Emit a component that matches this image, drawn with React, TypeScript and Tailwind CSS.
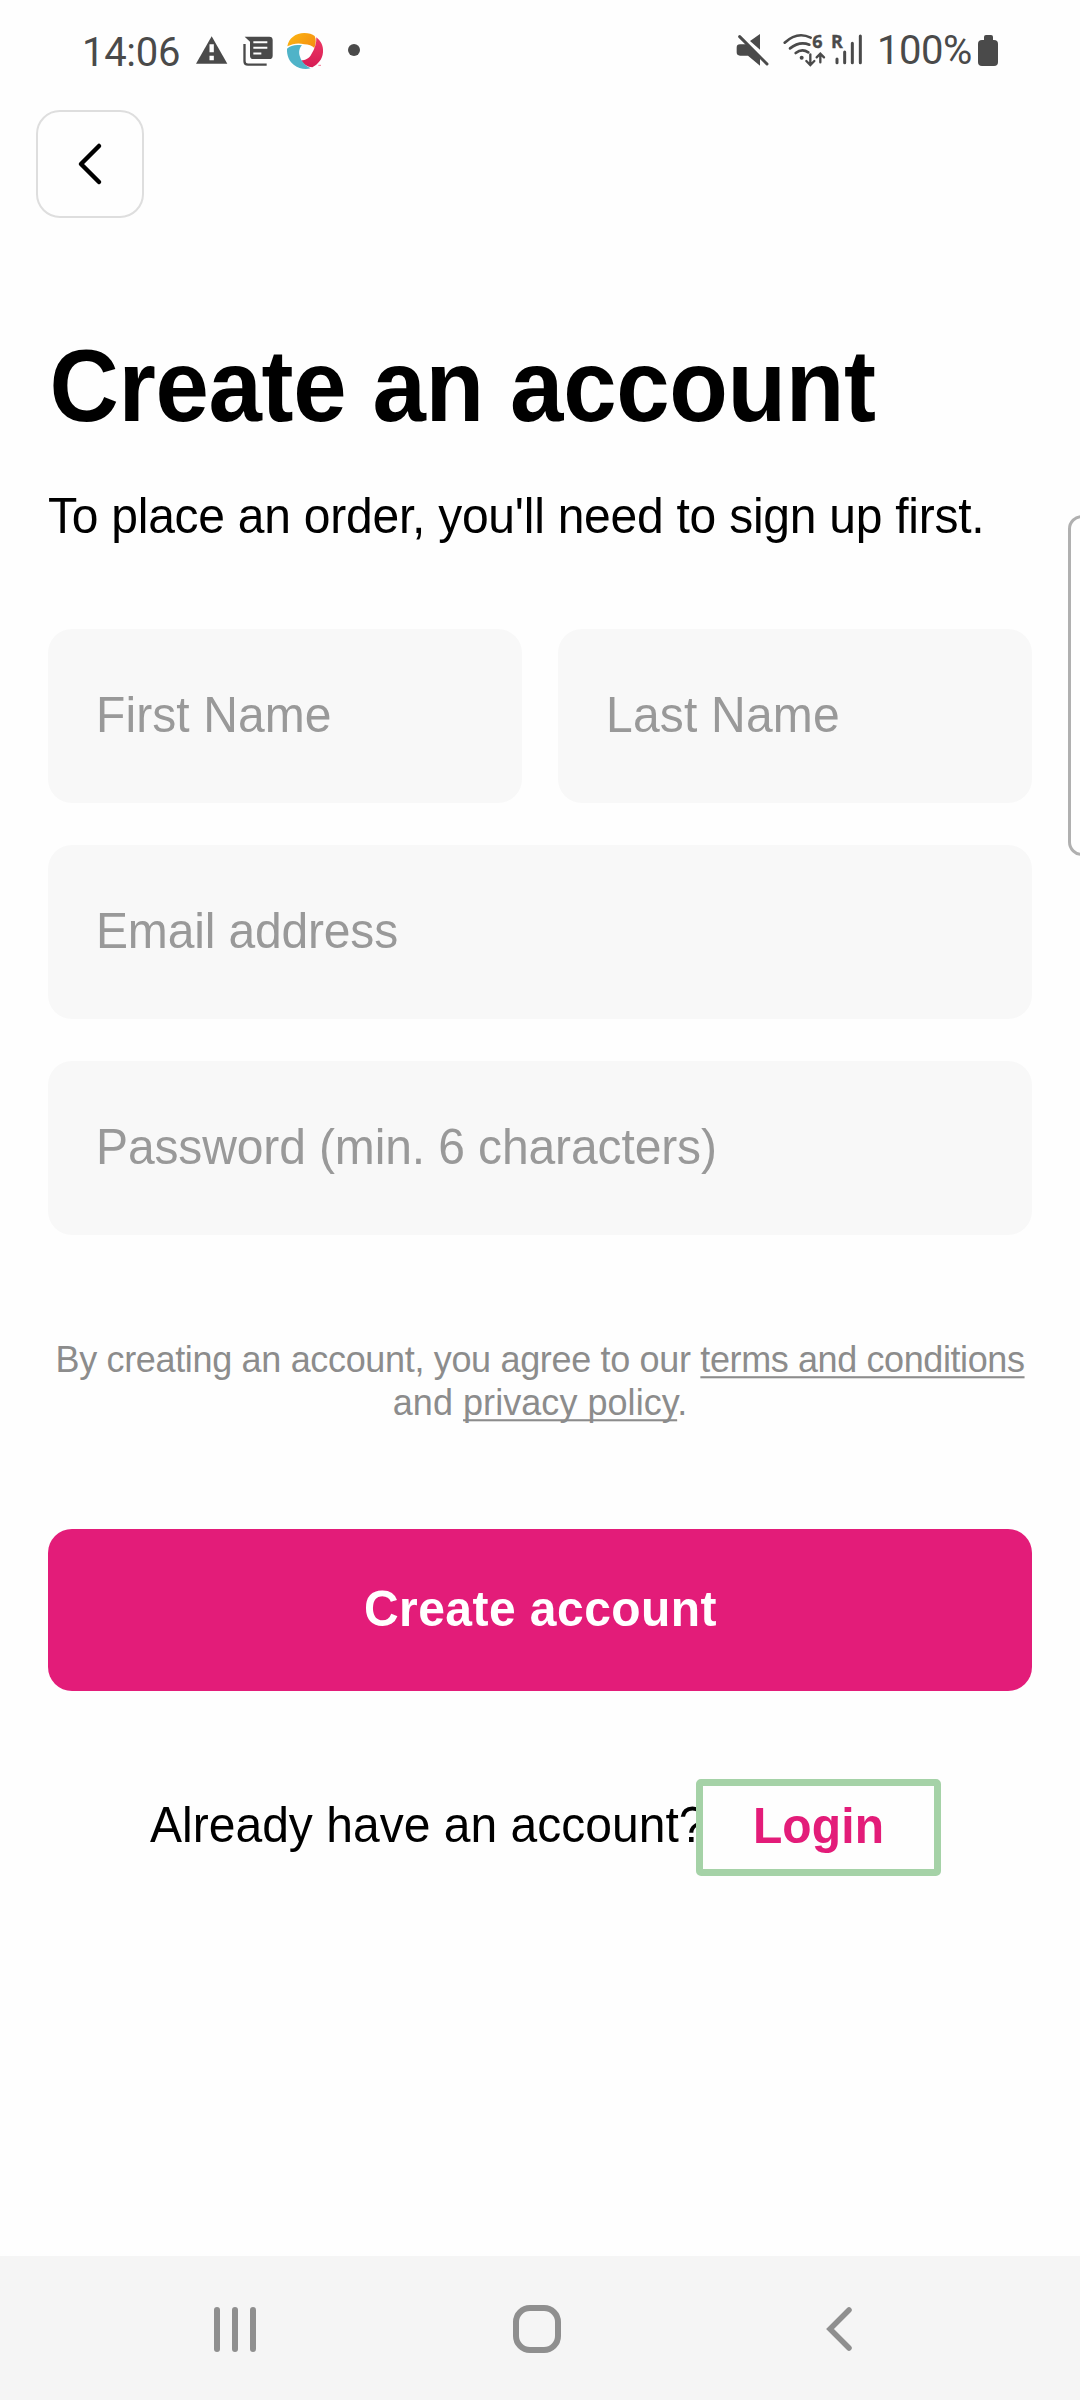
import React from "react";

const sans = "font-['Liberation_Sans',Arial,sans-serif]";

/* Slightly tall grotesque lettering, stretched from its baseline. */
const tall = "block origin-[0_84.65%] scale-y-[1.06] whitespace-nowrap";

function WarningIcon() {
  return (
    <svg className="h-[28px] w-[32px]" viewBox="18 33 96 84" fill="#4a4a4a">
      <path d="M65 34 L112 116 H18 Z" />
      <path d="M58.500 58h13v24h-13zM58.500 92h13v14h-13z" fill="#fefefe" />
    </svg>
  );
}

function NewsIcon() {
  return (
    <svg className="h-[31px] w-[30px]" viewBox="159 33 90 93" fill="#4a4a4a">
      <path d="M164 35 H238 Q248 35 248 45 V92 Q248 102 238 102 H190 Q180 102 180 92 V50 Z" />
      <path d="M163.500 57 V109 Q163.500 119 174 119 H230" fill="none" stroke="#4a4a4a" strokeWidth="7" />
      <path d="M190 51.500h42M190 68.500h42M190 85.500h24" stroke="#fefefe" strokeWidth="6" />
    </svg>
  );
}

function SwirlLogo() {
  return (
    <svg className="h-[38px] w-[38px]" viewBox="285 21 114 114">
      <defs>
        <linearGradient id="sun" x1="0" y1="0" x2="1" y2="0.5">
          <stop offset="0" stopColor="#fdb913" />
          <stop offset="1" stopColor="#f59311" />
        </linearGradient>
        <linearGradient id="berry" x1="0" y1="0" x2="0" y2="1">
          <stop offset="0" stopColor="#ee3a64" />
          <stop offset="1" stopColor="#d61c55" />
        </linearGradient>
      </defs>
      <path d="M289 64 C293 40 314 24 340 24 C353 24 364 28 371 33 C376 44 375 56 370 69 C364 63 352 58 340 58 C324 53 306 55 289 64Z" fill="url(#sun)" />
      <path d="M376 37 C390 48 398 63 396 82 C394 104 381 118 364 127 C350 126 337 119 331 106 C343 106 355 100 361 88 C371 72 377 54 376 37Z" fill="url(#berry)" />
      <path d="M288 71 C299 61 314 58 333 61 C325 69 322 82 327 95 C332 111 344 122 359 130 C342 134 323 131 309 120 C295 109 287 92 288 71Z" fill="#4fb3c8" />
      <path d="M382 121h8" stroke="#ee3a64" strokeWidth="2" />
    </svg>
  );
}

function MuteIcon() {
  return (
    <svg className="h-[34px] w-[33px]" viewBox="18 24 99 102" fill="#4a4a4a">
      <path d="M20 68 Q20 58 30 58 H52 L90 94 V122 L54 92 H30 Q20 92 20 82 Z" />
      <path d="M60 48 L90 27 V74 Z" />
      <path d="M36 31 L117 112" stroke="#fefefe" strokeWidth="5" />
      <path d="M29 35 L111 117" stroke="#4a4a4a" strokeWidth="9" strokeLinecap="round" />
    </svg>
  );
}

function WifiIcon() {
  return (
    <svg className="h-[64px] w-[44px] overflow-visible" viewBox="156 -21 132 192" fill="none" stroke="#4a4a4a" strokeWidth="8" strokeLinecap="round">
      <path d="M164 53 Q202 18 242 38" />
      <path d="M180 70 Q209 47 238 59" />
      <path d="M197 84 Q216 69 235 82" />
      <circle cx="215" cy="98" r="6" fill="#4a4a4a" stroke="none" />
      <path d="M241 88 V119 M229 108 L241 120 L253 108 M271 112 V86 M260 97 L271 86 L282 97" strokeWidth="7" />
      <text x="247" y="68" fontSize="54" fontWeight="700" fontFamily="Open Sans, sans-serif" fill="#4a4a4a" strokeWidth="1">
        6
      </text>
    </svg>
  );
}

function SignalIcon() {
  return (
    <svg className="h-[64px] w-[32px] overflow-visible" viewBox="303 -21 96 192" fill="none" stroke="#4a4a4a" strokeWidth="9" strokeLinecap="round">
      <path d="M321 102V113M344 81V113M367 55V113M391 33V113" />
      <text x="303" y="69" fontSize="54" fontWeight="700" fontFamily="Open Sans, sans-serif" fill="#4a4a4a" strokeWidth="1">
        R
      </text>
    </svg>
  );
}

function StatusBar() {
  return (
    <header className="flex h-[100px] items-center pl-[82px] font-[Roboto,sans-serif] text-[40px] leading-[40px] text-[#4a4a4a]">
      <span className="mt-[5px] w-[114px] tracking-[-0.3px]">14:06</span>
      <WarningIcon />
      <div className="mt-[3px] ml-[15px]">
        <NewsIcon />
      </div>
      <div className="mt-[2px] ml-[13px]">
        <SwirlLogo />
      </div>
      <span className="ml-6 h-3 w-3 rounded-full bg-[#4a4a4a]" />
      <div className="ml-[376px]">
        <MuteIcon />
      </div>
      <div className="ml-[13px]">
        <WifiIcon />
      </div>
      <div className="ml-[5px]">
        <SignalIcon />
      </div>
      <span className="mt-[2px] ml-[14px] w-[101px] tracking-[-0.5px]">100%</span>
      <span className="flex h-[31px] w-5 flex-col items-center">
        <span className="h-[5px] w-[9px] rounded-t-[2px] bg-[#4a4a4a]" />
        <span className="w-full flex-1 rounded-[4px] bg-[#4a4a4a]" />
      </span>
    </header>
  );
}

function Field({ label, spacing }: { label: string; spacing: string }) {
  return (
    <div className="flex h-[174px] flex-1 items-center rounded-[24px] bg-[#f8f8f8] pl-12">
      <span className={`${tall} mb-px text-[48px] leading-[48px] text-[#999999] ${spacing}`}>{label}</span>
    </div>
  );
}

function NavBar() {
  return (
    <nav className="mt-auto flex h-[144px] items-center bg-[#f5f5f5] pt-[2px] pl-[214px]">
      <div className="flex w-[42px] justify-between">
        <span className="h-[45px] w-[6px] rounded-full bg-[#8f8f8f]" />
        <span className="h-[45px] w-[6px] rounded-full bg-[#8f8f8f]" />
        <span className="h-[45px] w-[6px] rounded-full bg-[#8f8f8f]" />
      </div>
      <span className="ml-[257px] h-12 w-12 rounded-[17px] border-[6px] border-[#8f8f8f]" />
      <svg className="ml-[264px] h-[48px] w-[30px]" viewBox="0 0 30 48" fill="none" stroke="#8f8f8f" strokeWidth="5.500" strokeLinecap="round" strokeLinejoin="miter">
        <path d="M24 5 L5 24 L24 43" />
      </svg>
    </nav>
  );
}

export default function App() {
  return (
    <div className={`relative flex h-[2400px] w-[1080px] flex-col overflow-hidden bg-[#fefefe] text-black ${sans}`}>
      <StatusBar />

      <button className="mt-[10px] ml-9 flex h-[108px] w-[108px] items-center justify-center rounded-[24px] border-2 border-[#dedede]">
        <svg className="h-[44px] w-[28px]" viewBox="0 0 28 44" fill="none" stroke="#000" strokeWidth="4.500" strokeLinecap="round" strokeLinejoin="round">
          <path d="M23 4 L5 22 L23 40" />
        </svg>
      </button>

      <main className="flex flex-col px-12">
        <h1 className={`${tall} mt-[122px] ml-[1.5px] text-[96px] leading-[96px] font-bold tracking-[-0.36px]`}>Create an account</h1>
        <p className={`${tall} mt-[57px] text-[48px] leading-[48px] tracking-[-0.25px]`}>
          To place an order, you'll need to sign up first.
        </p>

        <form className="mt-[88px] flex flex-col gap-[42px]">
          <div className="flex gap-9">
            <Field label="First Name" spacing="tracking-[0.09px]" />
            <Field label="Last Name" spacing="tracking-[0.2px]" />
          </div>
          <div className="flex">
            <Field label="Email address" spacing="tracking-[-0.16px]" />
          </div>
          <div className="flex">
            <Field label="Password (min. 6 characters)" spacing="tracking-[-0.12px]" />
          </div>
        </form>

        <p className="mt-[103px] text-center text-[36px] leading-[43px] whitespace-nowrap text-[#8c8c8c]">
          <span className="block origin-[0_79%] scale-y-[1.05] tracking-[-0.33px]">
            By creating an account, you agree to our{" "}
            <a className="tracking-[-0.4px] underline decoration-2 underline-offset-[4px] [text-decoration-skip-ink:none]">terms and conditions</a>
          </span>
          <span className="block origin-[0_79%] scale-y-[1.05] tracking-[0.05px]">
            and <a className="underline decoration-2 underline-offset-[4px] [text-decoration-skip-ink:none]">privacy policy</a>.
          </span>
        </p>

        <button className="mt-[105px] flex h-[162px] items-center justify-center rounded-[24px] bg-[#e31c79]">
          <span className={`${tall} ml-px text-[48px] leading-[48px] font-bold tracking-[0.45px] text-white`}>Create account</span>
        </button>

        <div className="mt-[88px] ml-[102px] flex h-[97px] items-center">
          <span className={`${tall} mb-[3px] w-[546px] text-[48px] leading-[48px] tracking-[0.02px]`}>Already have an account?</span>
          <button className="relative flex h-[97px] w-[245px] items-center justify-center rounded-[5px] border-[7px] border-[#a5d2a7] bg-[#fefefe]">
            <span className={`${tall} mb-px text-[48px] leading-[48px] font-bold tracking-[0.1px] text-[#e31c79]`}>Login</span>
          </button>
        </div>
      </main>

      <NavBar />

      <aside className="absolute top-[515px] left-[1068px] h-[341px] w-[60px] rounded-[14px] border-[3px] border-[#b0b0b0] bg-[#fefefe]" />
    </div>
  );
}
